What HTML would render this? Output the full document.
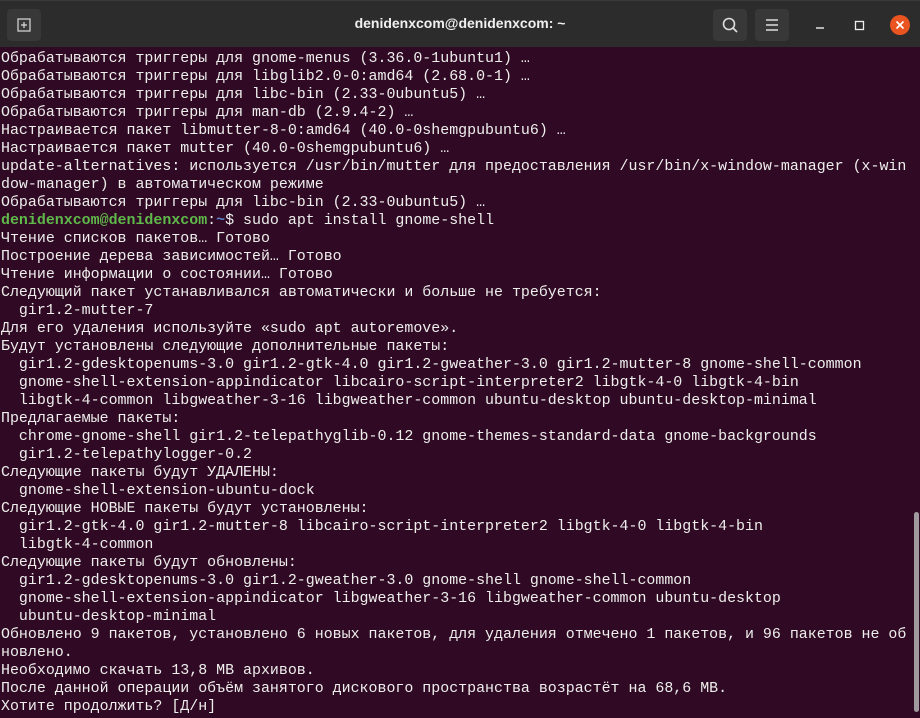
<!DOCTYPE html>
<html><head><meta charset="utf-8"><style>
html,body{margin:0;padding:0;width:920px;height:718px;overflow:hidden;background:#300a24;}
.hdr{position:absolute;left:0;top:0;width:920px;height:47px;background:#2c2c2c;border-top:1px solid #3a3a3a;box-sizing:border-box;}
.title{position:absolute;left:0;width:920px;top:14px;text-align:center;color:#f0f0f0;font:bold 14px "Liberation Sans",sans-serif;}
.btn{position:absolute;top:8px;width:34px;height:32px;background:#383838;border-radius:4px;}
.term{position:absolute;left:1px;top:50px;margin:0;font:14.95px/18px "Liberation Mono","DejaVu Sans Mono",monospace;color:#eeeeec;white-space:pre;}
.g{font-weight:bold;color:#5fb84a}
.b{color:#5a7fc8;font-weight:bold}
.sb{position:absolute;left:914px;top:512px;width:5px;height:200px;background:#a09a9e;border-radius:3px;}
</style></head><body>
<div class="hdr">
<div class="btn" style="left:7px"><svg width="34" height="32"><rect x="11" y="10" width="12" height="12" fill="none" stroke="#ddd" stroke-width="1.2"/><path d="M17 13v6M14 16h6" stroke="#ddd" stroke-width="1.2"/></svg></div>
<div class="title">denidenxcom@denidenxcom: ~</div>
<div class="btn" style="left:713px"><svg width="34" height="32"><circle cx="16" cy="15" r="5.5" fill="none" stroke="#ddd" stroke-width="1.6"/><path d="M20 19l4 4" stroke="#ddd" stroke-width="1.8"/></svg></div>
<div class="btn" style="left:755px"><svg width="34" height="32"><path d="M11 11h12M11 16h12M11 21h12" stroke="#ddd" stroke-width="1.4"/></svg></div>
<svg style="position:absolute;left:808px;top:10px" width="112" height="30"><path d="M8 17h8" stroke="#eee" stroke-width="1.4"/><rect x="47.5" y="10.5" width="8" height="8" fill="none" stroke="#eee" stroke-width="1.3"/><circle cx="92" cy="14" r="10" fill="#e95420"/><path d="M88.5 10.5l7 7M95.5 10.5l-7 7" stroke="#fff" stroke-width="1.6"/></svg>
</div>
<pre class="term">Обрабатываются триггеры для gnome-menus (3.36.0-1ubuntu1) …
Обрабатываются триггеры для libglib2.0-0:amd64 (2.68.0-1) …
Обрабатываются триггеры для libc-bin (2.33-0ubuntu5) …
Обрабатываются триггеры для man-db (2.9.4-2) …
Настраивается пакет libmutter-8-0:amd64 (40.0-0shemgpubuntu6) …
Настраивается пакет mutter (40.0-0shemgpubuntu6) …
update-alternatives: используется /usr/bin/mutter для предоставления /usr/bin/x-window-manager (x-win
dow-manager) в автоматическом режиме
Обрабатываются триггеры для libc-bin (2.33-0ubuntu5) …
<span class="g">denidenxcom@denidenxcom</span>:<span class="b">~</span>$ sudo apt install gnome-shell
Чтение списков пакетов… Готово
Построение дерева зависимостей… Готово
Чтение информации о состоянии… Готово
Следующий пакет устанавливался автоматически и больше не требуется:
  gir1.2-mutter-7
Для его удаления используйте «sudo apt autoremove».
Будут установлены следующие дополнительные пакеты:
  gir1.2-gdesktopenums-3.0 gir1.2-gtk-4.0 gir1.2-gweather-3.0 gir1.2-mutter-8 gnome-shell-common
  gnome-shell-extension-appindicator libcairo-script-interpreter2 libgtk-4-0 libgtk-4-bin
  libgtk-4-common libgweather-3-16 libgweather-common ubuntu-desktop ubuntu-desktop-minimal
Предлагаемые пакеты:
  chrome-gnome-shell gir1.2-telepathyglib-0.12 gnome-themes-standard-data gnome-backgrounds
  gir1.2-telepathylogger-0.2
Следующие пакеты будут УДАЛЕНЫ:
  gnome-shell-extension-ubuntu-dock
Следующие НОВЫЕ пакеты будут установлены:
  gir1.2-gtk-4.0 gir1.2-mutter-8 libcairo-script-interpreter2 libgtk-4-0 libgtk-4-bin
  libgtk-4-common
Следующие пакеты будут обновлены:
  gir1.2-gdesktopenums-3.0 gir1.2-gweather-3.0 gnome-shell gnome-shell-common
  gnome-shell-extension-appindicator libgweather-3-16 libgweather-common ubuntu-desktop
  ubuntu-desktop-minimal
Обновлено 9 пакетов, установлено 6 новых пакетов, для удаления отмечено 1 пакетов, и 96 пакетов не об
новлено.
Необходимо скачать 13,8 MB архивов.
После данной операции объём занятого дискового пространства возрастёт на 68,6 MB.
Хотите продолжить? [Д/н]</pre>
<div class="sb"></div>
</body></html>
